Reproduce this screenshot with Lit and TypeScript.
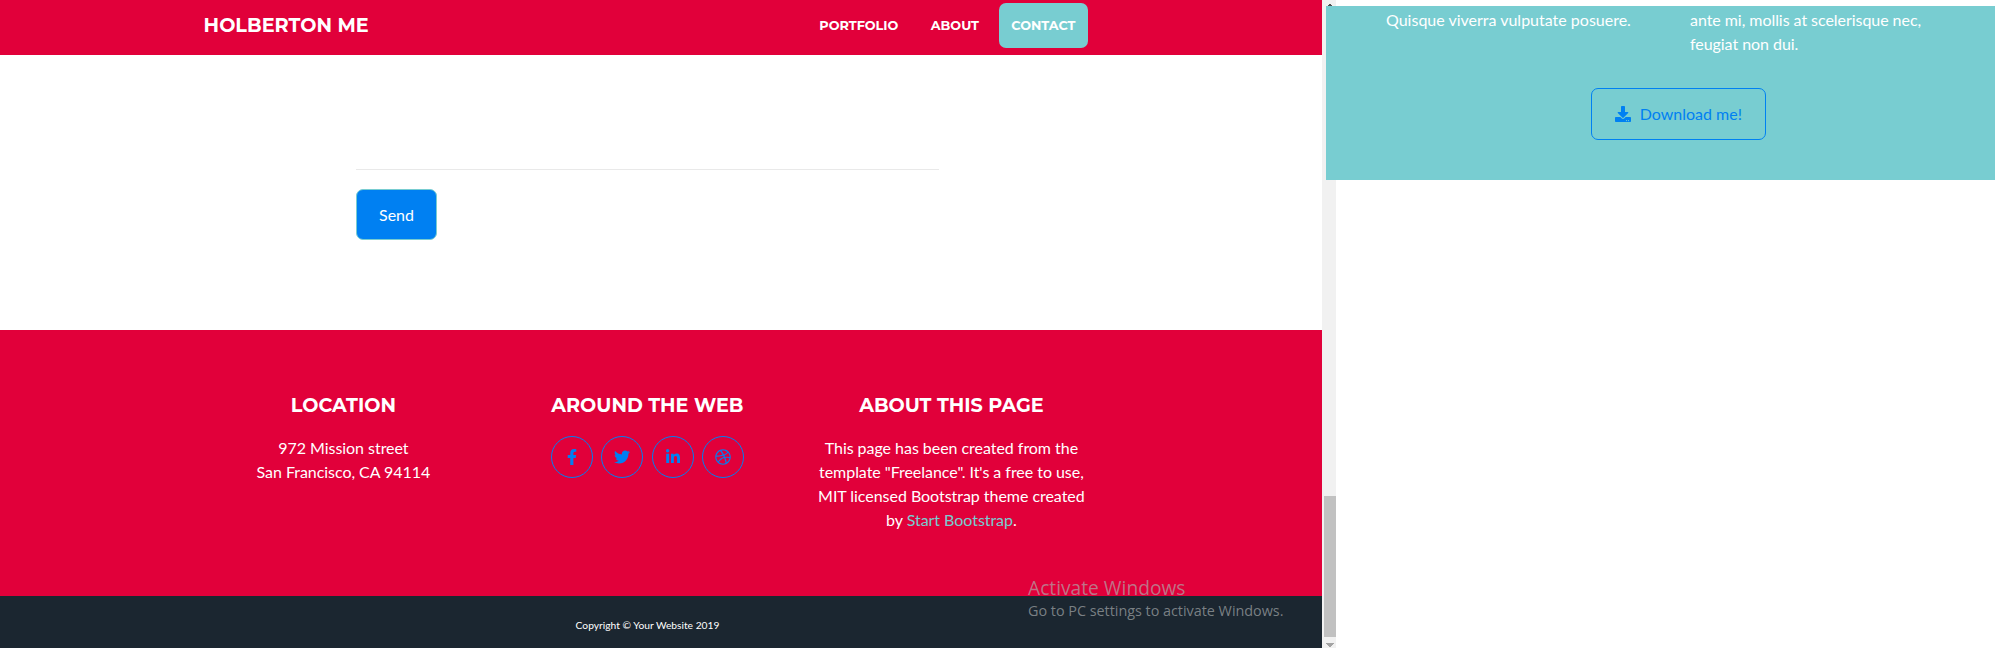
import { LitElement, html, svg, css } from "lit";
import { customElement } from "lit/decorators.js";

interface Glyph {
  box: string;
  width: number;
  d: string;
}

const ICONS: Record<string, Glyph> = {
  facebook: {
    box: "0 0 320 512",
    width: 10,
    d: "M279.14 288l14.22-92.66h-88.91v-60.13c0-25.35 12.42-50.06 52.24-50.06h40.42V6.26S260.43 0 225.36 0c-73.22 0-121.08 44.38-121.08 124.72v70.62H22.89V288h81.39v224h100.17V288z",
  },
  twitter: {
    box: "0 0 512 512",
    width: 16,
    d: "M459.37 151.716c.325 4.548.325 9.097.325 13.645 0 138.72-105.583 298.558-298.558 298.558-59.452 0-114.68-17.219-161.137-47.106 8.447.974 16.568 1.299 25.34 1.299 49.055 0 94.213-16.568 130.274-44.832-46.132-.975-84.792-31.188-98.112-72.772 6.498.974 12.995 1.624 19.818 1.624 9.421 0 18.843-1.3 27.614-3.573-48.081-9.747-84.143-51.98-84.143-102.985v-1.299c13.969 7.797 30.214 12.67 47.431 13.319-28.264-18.843-46.781-51.005-46.781-87.391 0-19.492 5.197-37.36 14.294-52.954 51.655 63.675 129.3 105.258 216.365 109.807-1.624-7.797-2.599-15.918-2.599-24.04 0-57.828 46.782-104.934 104.934-104.934 30.213 0 57.502 12.67 76.67 33.137 23.715-4.548 46.456-13.32 66.599-25.34-7.798 24.366-24.366 44.833-46.132 57.827 21.117-2.273 41.584-8.122 60.426-16.243-14.292 20.791-32.161 39.308-52.628 54.253z",
  },
  linkedin: {
    box: "0 0 448 512",
    width: 14,
    d: "M100.28 448H7.4V148.9h92.88zM53.79 108.1C24.09 108.1 0 83.5 0 53.8a53.79 53.79 0 0 1 107.58 0c0 29.7-24.1 54.3-53.79 54.3zM447.9 448h-92.68V302.4c0-34.7-.7-79.2-48.29-79.2-48.29 0-55.69 37.7-55.69 76.7V448h-92.78V148.9h89.08v40.8h1.3c12.4-23.5 42.69-48.3 87.88-48.3 94 0 111.28 61.9 111.28 142.3V448z",
  },
  dribbble: {
    box: "0 0 512 512",
    width: 16,
    d: "M256 8C119.252 8 8 119.252 8 256s111.252 248 248 248 248-111.252 248-248S392.748 8 256 8zm163.97 114.366c29.503 36.046 47.369 81.957 47.835 131.955-6.984-1.477-77.018-15.682-147.502-6.818-5.752-14.041-11.181-26.393-18.617-41.614 78.321-31.977 113.818-77.482 118.284-83.523zM396.421 97.87c-3.81 5.427-35.697 48.286-111.021 76.519-34.712-63.776-73.185-116.168-79.04-124.008 67.176-16.193 137.966 1.27 190.061 47.489zm-230.48-33.25c5.585 7.659 43.438 60.116 78.537 122.509-99.087 26.313-186.36 25.934-195.834 25.809C62.38 147.205 106.678 92.573 165.941 64.62zM44.17 256.323c0-2.166.043-4.322.108-6.473 9.268.19 111.92 1.513 217.706-30.146 6.064 11.868 11.857 23.915 17.174 35.949-76.599 21.575-146.194 83.527-180.531 142.306C64.794 360.405 44.17 310.73 44.17 256.323zm81.807 167.113c22.127-45.233 82.178-103.622 167.579-132.756 29.74 77.283 42.039 142.053 45.189 160.638-68.112 29.013-150.015 21.053-212.768-27.882zm248.38 8.489c-2.171-12.886-13.446-74.897-41.152-151.033 66.38-10.626 124.7 6.768 131.947 9.055-9.442 58.941-43.273 109.844-90.795 141.978z",
  },
  download: {
    box: "0 0 512 512",
    width: 16,
    d: "M216 0h80c13.3 0 24 10.7 24 24v168h87.7c17.8 0 26.7 21.5 14.1 34.1L269.7 378.3c-7.5 7.5-19.8 7.5-27.3 0L90.1 226.1c-12.6-12.6-3.7-34.1 14.1-34.1H192V24c0-13.3 10.7-24 24-24zm296 376v112c0 13.3-10.7 24-24 24H24c-13.3 0-24-10.7-24-24V376c0-13.3 10.7-24 24-24h146.700l49 49c20.100 20.100 52.500 20.100 72.600 0l49-49H488c13.300 0 24 10.700 24 24zm-124 88c0-11-9-20-20-20s-20 9-20 20 9 20 20 20 20-9 20-20zm64 0c0-11-9-20-20-20s-20 9-20 20 9 20 20 20 20-9 20-20z",
  },
};

const icon = (name: string) => {
  const g = ICONS[name];
  return html`<svg viewBox=${g.box} width=${g.width} height="16" fill="currentColor" aria-hidden="true">
    ${svg`<path d=${g.d}></path>`}
  </svg>`;
};

@customElement("app-root")
export class AppRoot extends LitElement {
  static styles = css`
    :host {
      display: flex;
      align-items: flex-start;
      position: relative;
      height: 654px;
      overflow: hidden;
      background: #fff;
      color: #fff;
      font: 16px/24px Lato, "Open Sans", sans-serif;
      --red: #e1003a;
      --teal: #78cdd1;
      --blue: #0080f2;
    }
    * { box-sizing: border-box; }
    svg { display: block; }
    p, h4 { margin: 0; }
    a { text-decoration: none; color: inherit; }
    .page { width: 1322px; height: 648px; display: flex; flex-direction: column; flex: none; }
    .navbar {
      height: 55px; background: var(--red); display: flex; justify-content: space-between;
      padding: 3px 234px 0 203.6px; flex: none;
      font-family: Montserrat, Inter, sans-serif; font-weight: 700;
    }
    .brand { font-size: 19.2px; line-height: 45px; letter-spacing: 0.03px; }
    .links { display: flex; gap: 7.4px; }
    .link { height: 45px; padding: 0 12.5px; border-radius: 7px; font-size: 12.8px; line-height: 45px; }
    .active { background: var(--teal); }
    .contact { flex: none; height: 275px; padding: 114px 0 0 356px; color: #212529; }
    .rule { width: 583px; height: 1px; background: #e9e9e9; margin-bottom: 19px; }
    .send {
      display: block; width: 81px; height: 51px; padding: 0; border: 1px solid var(--teal);
      border-radius: 7px; background: var(--blue); color: #fff; font: inherit;
    }
    .footer {
      flex: none; height: 266px; background: var(--red); padding: 64px 0 0 191.4px;
      display: grid; grid-template-columns: repeat(3, 304px); text-align: center;
    }
    .col { padding: 0 15px; }
    .col p { letter-spacing: -0.04px; }
    .title {
      font: 700 19.2px/23px Montserrat, Inter, sans-serif; margin-bottom: 19px; white-space: nowrap;
    }
    .accent { color: var(--teal); }
    .socials { display: flex; justify-content: center; gap: 8.6px; }
    .social {
      width: 42px; height: 42px; border: 1px solid var(--blue); border-radius: 50%;
      color: var(--blue); display: grid; place-items: center;
    }
    .copyright {
      flex: none; height: 52px; background: #1b2630; padding: 22px 27px 0 0;
      text-align: center; font-size: 10.24px; line-height: 15.4px;
    }
    .scrollbar {
      flex: none; width: 14px; height: 648px; background: #f1f1f1;
      display: flex; flex-direction: column; align-items: flex-end;
    }
    .arrow { height: 16px; margin: 0 2px; }
    .up { padding-top: 4px; color: #505050; }
    .down { height: 11px; padding-top: 6px; color: #a3a3a3; }
    .thumb { width: 12px; height: 141px; margin-top: auto; background: #c1c1c1; }
    .panel {
      position: relative; flex: none; width: 669px; height: 174px; margin: 6px 0 0 -10px;
      background: var(--teal); display: flex; flex-direction: column; align-items: flex-start;
      padding: 2px 0 0 60px;
    }
    .copy { display: grid; grid-template-columns: 304px 245px; height: 80px; }
    .copy p + p { letter-spacing: -0.05px; }
    .download {
      display: flex; gap: 8.7px; align-items: center; width: 175px; height: 52px; margin-left: 205px;
      padding: 0 0 0 23px; border: 1px solid var(--blue); border-radius: 7px; color: var(--blue);
      white-space: nowrap;
    }
    .watermark {
      position: absolute; left: 1028px; top: 575px; color: rgba(172, 176, 176, 0.66);
      font-family: "Open Sans", "Noto Sans", sans-serif; white-space: nowrap;
    }
    .big { font-size: 19.2px; line-height: 26px; }
    .small { font-size: 14.4px; line-height: 20px; letter-spacing: -0.02px; }
  `;

  render() {
    return html`
      <div class="page">
        <nav class="navbar">
          <a class="brand">HOLBERTON ME</a>
          <div class="links">
            <a class="link">PORTFOLIO</a>
            <a class="link">ABOUT</a>
            <a class="link active">CONTACT</a>
          </div>
        </nav>
        <section class="contact">
          <div class="rule"></div>
          <button class="send">Send</button>
        </section>
        <footer class="footer">
          <div class="col">
            <h4 class="title">LOCATION</h4>
            <p>972 Mission street<br />San Francisco, CA 94114</p>
          </div>
          <div class="col">
            <h4 class="title">AROUND THE WEB</h4>
            <div class="socials">
              ${["facebook", "twitter", "linkedin", "dribbble"].map(
                (name) => html`<a class="social">${icon(name)}</a>`
              )}
            </div>
          </div>
          <div class="col">
            <h4 class="title">ABOUT THIS PAGE</h4>
            <p>
              This page has been created from the template "Freelance". It's a free to use, MIT
              licensed Bootstrap theme created by <a class="accent">Start Bootstrap</a>.
            </p>
          </div>
        </footer>
        <div class="copyright">Copyright © Your Website 2019</div>
      </div>
      <div class="scrollbar">
        <svg class="up arrow" width="8" viewBox="0 0 8 12"><path fill="currentColor" d="M3 0h2v1h1v1h1v1h1v1H0V3h1V2h1V1h1z" /></svg>
        <div class="thumb"></div>
        <svg class="down arrow" width="8" viewBox="0 0 8 5"><path fill="currentColor" d="M0 0h8v1H7v1H6v1H5v1H3V3H2V2H1V1H0z" /></svg>
      </div>
      <section class="panel">
        <div class="copy">
          <p>Quisque viverra vulputate posuere.</p>
          <p>ante mi, mollis at scelerisque nec, feugiat non dui.</p>
        </div>
        <a class="download">${icon("download")}<span>Download me!</span></a>
      </section>
      <div class="watermark">
        <div class="big">Activate Windows</div>
        <div class="small">Go to PC settings to activate Windows.</div>
      </div>
    `;
  }
}
